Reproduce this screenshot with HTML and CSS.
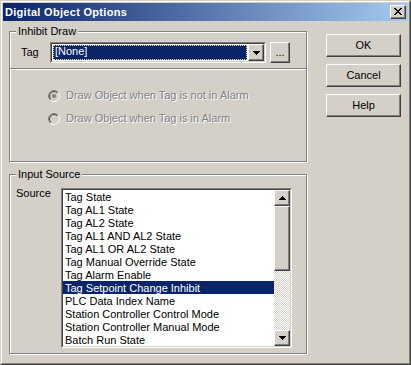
FILE: index.html
```html
<!DOCTYPE html>
<html>
<head>
<meta charset="utf-8">
<title>Digital Object Options</title>
<link rel="stylesheet" href="styles.css">
</head>
<body>
<div class="window">
  <div class="frame">
    <div class="titlebar">
      <span class="title">Digital Object Options</span>
      <span class="close raised">
        <svg width="8" height="7" viewBox="0 0 8 7" shape-rendering="crispEdges"><path fill="#000" d="M0 0h2v1H0zM6 0h2v1H6zM1 1h2v1H1zM5 1h2v1H5zM2 2h4v1H2zM3 3h2v1H3zM2 4h4v1H2zM1 5h2v1H1zM5 5h2v1H5zM0 6h2v1H0zM6 6h2v1H6z"/></svg>
      </span>
    </div>
    <div class="client">
      <div class="left">
        <div class="group inhibit">
          <span class="group-title">Inhibit Draw</span>
          <div class="tag-row">
            <span class="tag-label">Tag</span>
            <div class="combo">
              <div class="combo-inner">
                <div class="combo-value"><span class="focus">[None]</span></div>
                <span class="combo-btn raised">
                  <svg width="7" height="4" viewBox="0 0 7 4" shape-rendering="crispEdges"><path fill="#000" d="M0 0h7v1H0zM1 1h5v1H1zM2 2h3v1H2zM3 3h1v1H3z"/></svg>
                </span>
              </div>
            </div>
            <span class="btn browse raised">...</span>
          </div>
          <div class="sep"></div>
          <div class="radios">
            <div class="radio-row">
              <svg class="radio" width="12" height="12" viewBox="0 0 12 12">
                <defs>
                  <linearGradient id="ro" x1="0" y1="0" x2="1" y2="1"><stop offset="0.5" stop-color="#808080"/><stop offset="0.5" stop-color="#ffffff"/></linearGradient>
                  <linearGradient id="ri" x1="0" y1="0" x2="1" y2="1"><stop offset="0.5" stop-color="#404040"/><stop offset="0.5" stop-color="#d4d0c8"/></linearGradient>
                </defs>
                <circle cx="6" cy="6" r="5.5" fill="none" stroke="url(#ro)"/>
                <circle cx="6" cy="6" r="4.5" fill="#d4d0c8" stroke="url(#ri)"/>
                <circle cx="6" cy="6" r="2" fill="#808080"/>
              </svg>
              <span class="disabled">Draw Object when Tag is not in Alarm</span>
            </div>
            <div class="radio-row">
              <svg class="radio" width="12" height="12" viewBox="0 0 12 12">
                <circle cx="6" cy="6" r="5.5" fill="none" stroke="url(#ro)"/>
                <circle cx="6" cy="6" r="4.5" fill="#d4d0c8" stroke="url(#ri)"/>
              </svg>
              <span class="disabled">Draw Object when Tag is in Alarm</span>
            </div>
          </div>
        </div>
        <div class="group input">
          <span class="group-title">Input Source</span>
          <div class="source-row">
            <span class="source-label">Source</span>
            <div class="listbox">
              <div class="listbox-inner">
                <ul class="items">
                  <li>Tag State</li>
                  <li>Tag AL1 State</li>
                  <li>Tag AL2 State</li>
                  <li>Tag AL1 AND AL2 State</li>
                  <li>Tag AL1 OR AL2 State</li>
                  <li>Tag Manual Override State</li>
                  <li>Tag Alarm Enable</li>
                  <li class="selected">Tag Setpoint Change Inhibit</li>
                  <li>PLC Data Index Name</li>
                  <li>Station Controller Control Mode</li>
                  <li>Station Controller Manual Mode</li>
                  <li>Batch Run State</li>
                </ul>
                <div class="scrollbar">
                  <span class="sb-btn raised">
                    <svg width="7" height="4" viewBox="0 0 7 4" shape-rendering="crispEdges"><path fill="#000" d="M3 0h1v1H3zM2 1h3v1H2zM1 2h5v1H1zM0 3h7v1H0z"/></svg>
                  </span>
                  <span class="sb-thumb raised"></span>
                  <span class="sb-track"></span>
                  <span class="sb-btn raised">
                    <svg width="7" height="4" viewBox="0 0 7 4" shape-rendering="crispEdges"><path fill="#000" d="M0 0h7v1H0zM1 1h5v1H1zM2 2h3v1H2zM3 3h1v1H3z"/></svg>
                  </span>
                </div>
              </div>
            </div>
          </div>
        </div>
      </div>
      <div class="buttons">
        <span class="btn cmd raised">OK</span>
        <span class="btn cmd raised">Cancel</span>
        <span class="btn cmd raised">Help</span>
      </div>
    </div>
  </div>
</div>
</body>
</html>
```

FILE: styles.css
```css
* { box-sizing: border-box; }

body {
  margin: 0;
  font-family: "Liberation Sans", Arial, sans-serif;
  font-size: 11px;
  line-height: 13px;
  color: #000;
  background: #d4d0c8;
}

.window {
  width: 411px;
  height: 365px;
  border: 1px solid;
  border-color: #d4d0c8 #404040 #404040 #d4d0c8;
  background: #d4d0c8;
}

.frame {
  height: 100%;
  border: 1px solid;
  border-color: #fff #808080 #808080 #fff;
  padding: 1px;
  display: flex;
  flex-direction: column;
}

.titlebar {
  height: 18px;
  flex: none;
  display: flex;
  align-items: center;
  padding: 0 2px;
  background: linear-gradient(to right, #0a246a, #a6caf0);
}

.title {
  flex: 1;
  color: #fff;
  font-weight: bold;
  letter-spacing: 0.3px;
}

.raised {
  background: #d4d0c8;
  border: 1px solid;
  border-color: #fff #404040 #404040 #fff;
  box-shadow: inset -1px -1px 0 #808080;
}

.close {
  width: 16px;
  height: 14px;
  display: flex;
  align-items: center;
  justify-content: center;
  padding-right: 1px;
  padding-bottom: 1px;
}

.client {
  flex: 1;
  display: flex;
  padding: 10px 0 0 6px;
}

.left {
  width: 298px;
  display: flex;
  flex-direction: column;
}

.group {
  position: relative;
  border: 1px solid #808080;
  box-shadow: inset 1px 1px 0 #fff, 1px 1px 0 #fff;
}

.group-title {
  position: absolute;
  top: -7px;
  left: 6px;
  padding: 0 2px;
  background: #d4d0c8;
}

.inhibit {
  height: 131px;
}

.tag-row {
  display: flex;
  align-items: center;
  margin-top: 10px;
  padding-left: 11px;
  height: 21px;
}

.tag-label {
  width: 29px;
}

.combo {
  width: 216px;
  height: 21px;
  border: 1px solid;
  border-color: #808080 #fff #fff #808080;
}

.combo-inner {
  height: 100%;
  display: flex;
  border: 1px solid;
  border-color: #404040 #d4d0c8 #d4d0c8 #404040;
  background: #fff;
}

.combo-value {
  flex: 1;
  padding: 1px;
  display: flex;
}

.focus {
  flex: 1;
  background: #0a246a;
  color: #fff;
  border: 1px dotted #f5db95;
  padding-left: 1px;
  line-height: 11px;
}

.combo-btn {
  width: 16px;
  display: flex;
  align-items: center;
  justify-content: center;
}

.btn {
  display: flex;
  align-items: center;
  justify-content: center;
}

.browse {
  width: 20px;
  height: 21px;
  margin-left: 4px;
}

.sep {
  margin-top: 5px;
  height: 2px;
  border-top: 1px solid #808080;
  border-bottom: 1px solid #fff;
}

.radios {
  margin-top: 19px;
  padding-left: 38px;
  display: flex;
  flex-direction: column;
  gap: 10px;
}

.radio-row {
  display: flex;
  align-items: center;
  height: 13px;
}

.radio {
  margin-right: 6px;
  flex: none;
}

.disabled {
  color: #808080;
  text-shadow: 1px 1px 0 #fff;
}

.input {
  margin-top: 12px;
  height: 180px;
}

.source-row {
  display: flex;
  margin-top: 13px;
  padding-left: 6px;
}

.source-label {
  width: 45px;
  margin-top: -1px;
}

.listbox {
  width: 231px;
  height: 160px;
  border: 1px solid;
  border-color: #808080 #fff #fff #808080;
}

.listbox-inner {
  height: 100%;
  display: flex;
  border: 1px solid;
  border-color: #404040 #d4d0c8 #d4d0c8 #404040;
  background: #fff;
}

.items {
  flex: 1;
  list-style: none;
  margin: 0;
  padding: 0;
}

.items li {
  height: 13px;
  line-height: 14px;
  padding-left: 2px;
  white-space: nowrap;
}

.items li.selected {
  background: #0a246a;
  color: #fff;
}

.scrollbar {
  width: 16px;
  display: flex;
  flex-direction: column;
}

.sb-btn {
  height: 16px;
  display: flex;
  align-items: center;
  justify-content: center;
}

.sb-thumb {
  height: 65px;
}

.sb-track {
  flex: 1;
  background-color: #d4d0c8;
  background-image: conic-gradient(#fff 25%, #d4d0c8 0 50%, #fff 0 75%, #d4d0c8 0);
  background-size: 2px 2px;
}

.buttons {
  margin-left: 19px;
  margin-top: 3px;
  display: flex;
  flex-direction: column;
  gap: 7px;
}

.cmd {
  width: 75px;
  height: 23px;
}
```
